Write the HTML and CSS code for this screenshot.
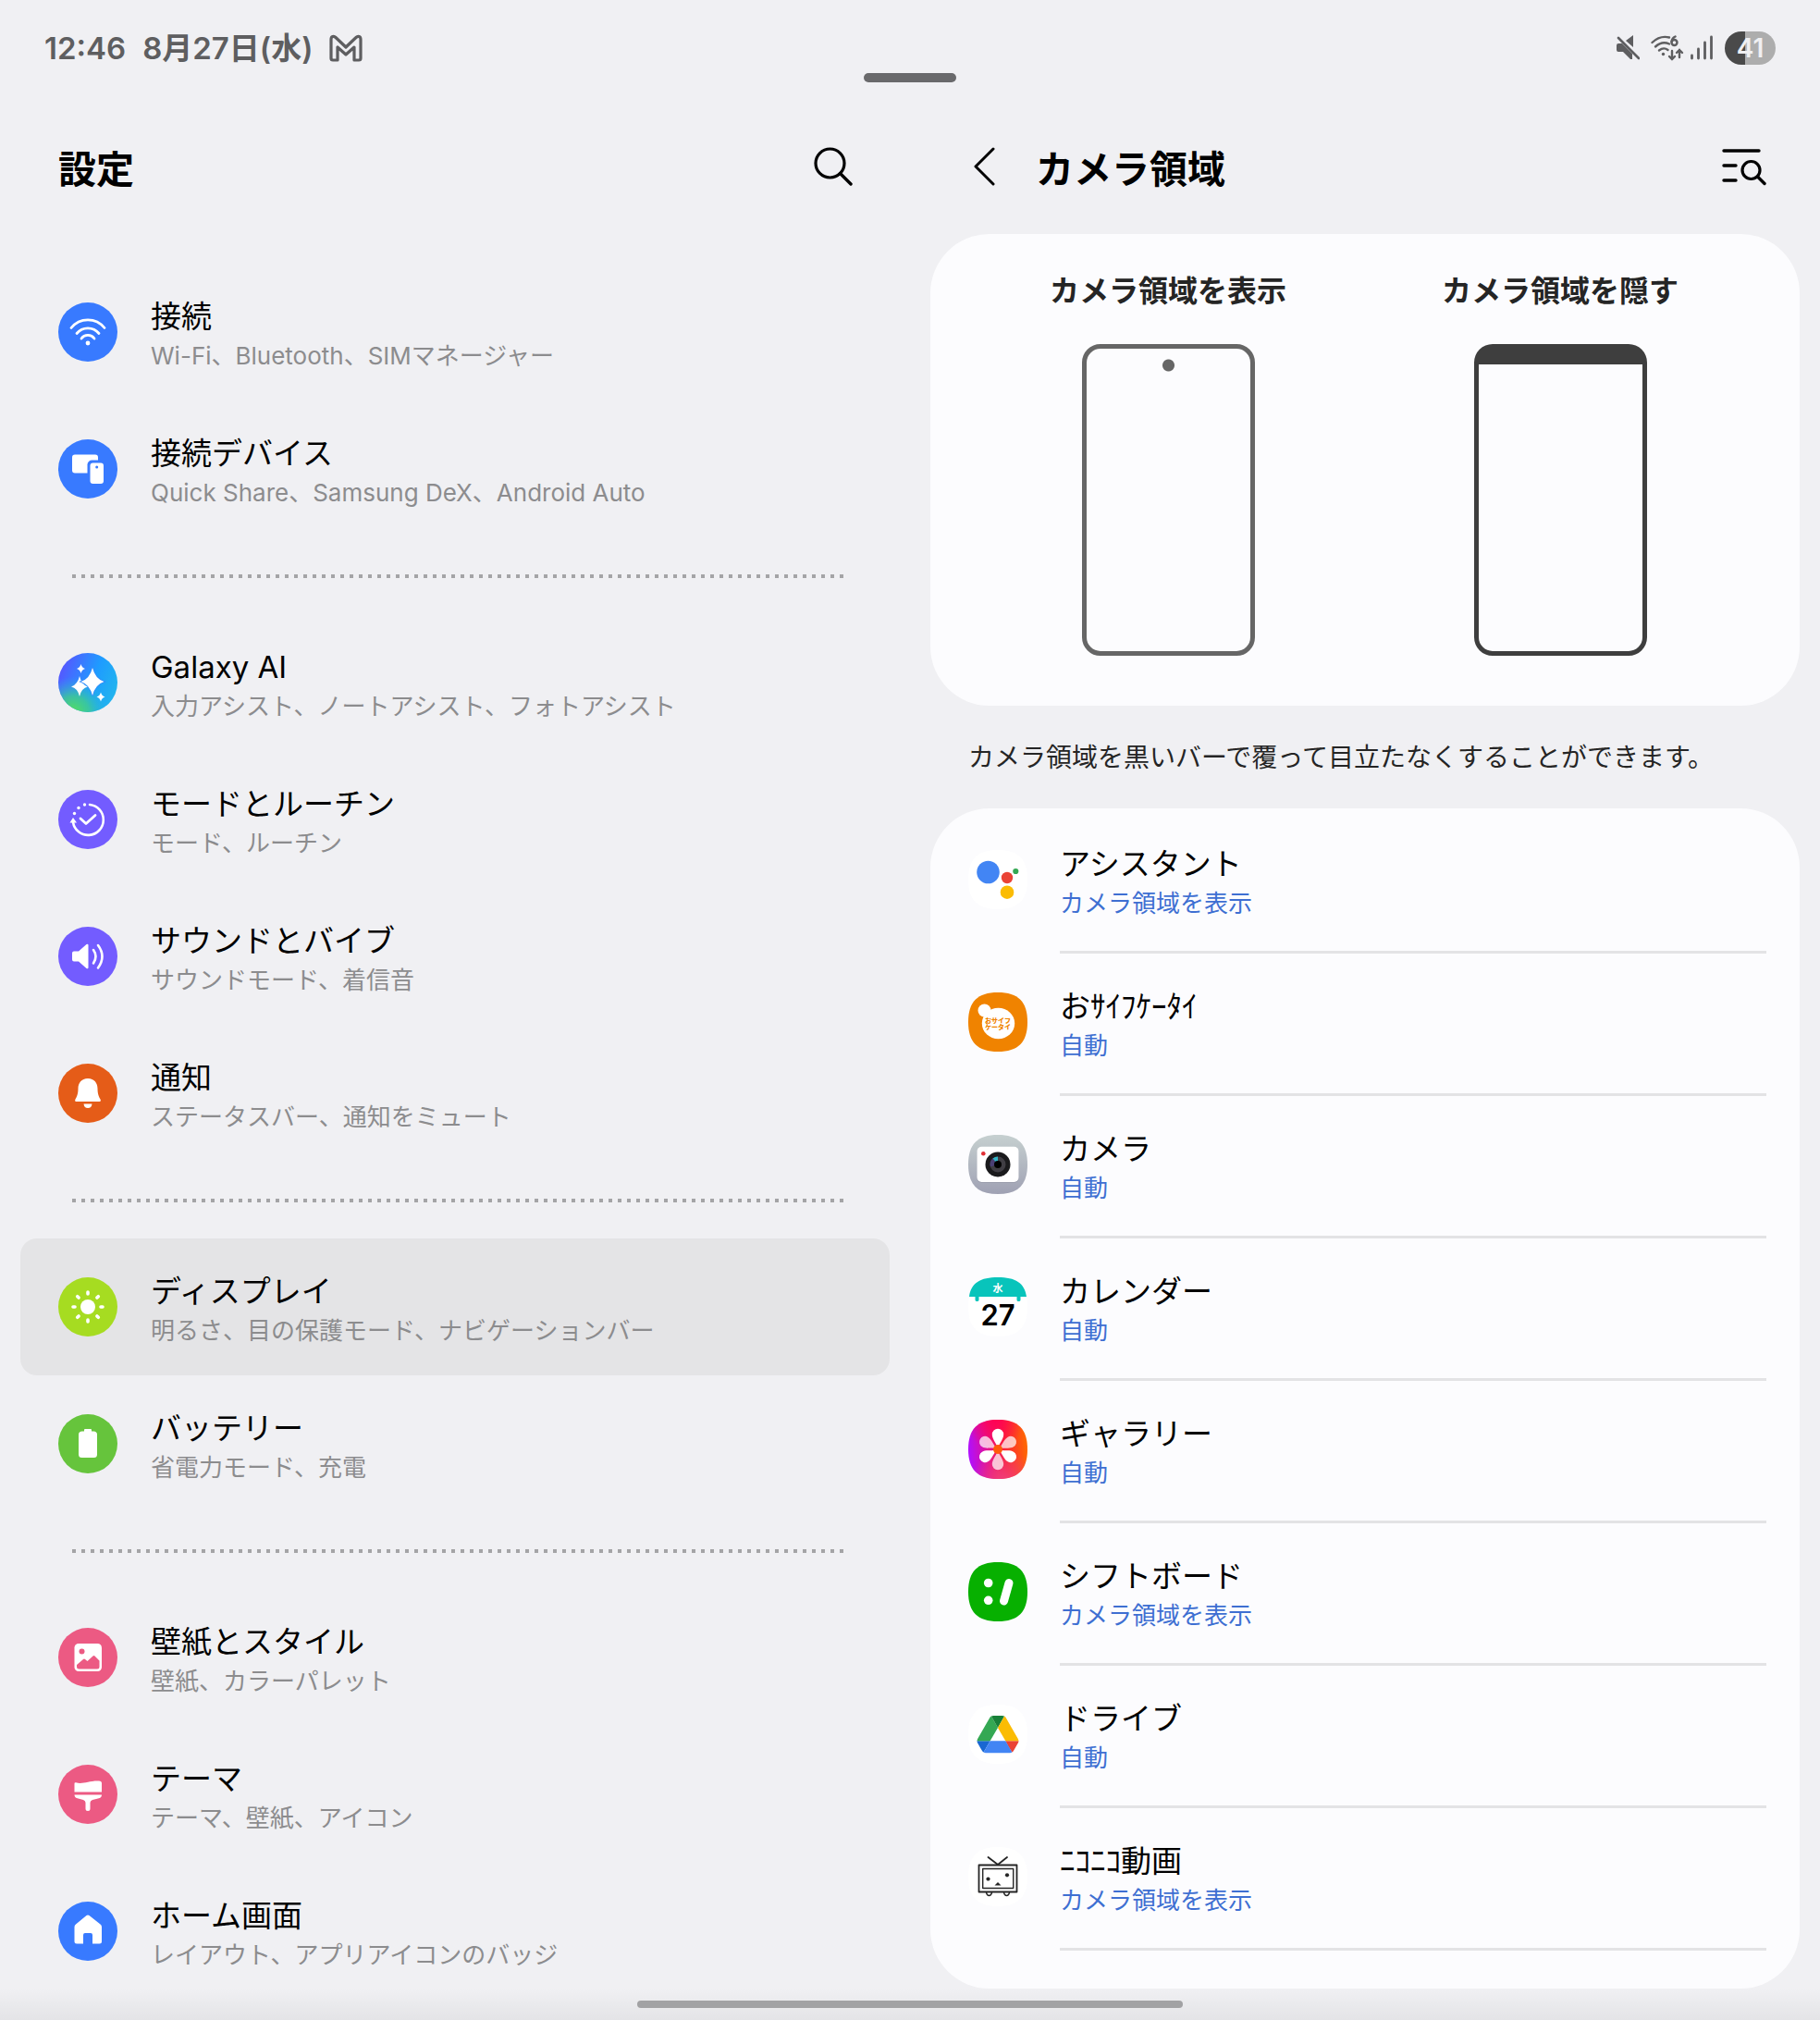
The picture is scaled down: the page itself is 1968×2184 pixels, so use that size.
FILE: index.html
```html
<!DOCTYPE html>
<html lang="ja">
<head>
  <meta charset="UTF-8">
  <meta name="viewport" content="width=device-width, initial-scale=1.0">
  <title>設定</title>
  <link rel="stylesheet" href="styles.css">
</head>
<body>
  <header class="status-bar">
    <div class="status-left">
      <span>12:46</span>
      <span>8月27日(水)</span>
      <svg class="mail-icon" viewBox="0 0 36 30"><path d="M2 26V5.500C2 2 5 1.500 7 3.500L18 14 29 3.500C31 1.500 34 2 34 5.500V26C34 27.500 33 28 32 28H27V14L18 22 9 14V28H4C3 28 2 27.500 2 26Z" fill="none" stroke="#5e5e60" stroke-width="3.200" stroke-linejoin="round"/></svg>
    </div>
    <div class="status-right">
      <svg class="mute-icon" viewBox="0 0 26 28"><path d="M1 11Q1 9 3 9H7L18 20V26L16 26 8 18H3Q1 18 1 16ZM11 6 19 0V13Z" fill="#5e5e60"/><path d="M3 3 25 25" stroke="#5e5e60" stroke-width="2.600" stroke-linecap="round"/></svg>
      <svg class="wifi6-icon" viewBox="0 0 36 28"><g fill="none" stroke="#5e5e60" stroke-width="2.400" stroke-linecap="round"><path d="M1.500 8Q10 0 20 2.500"/><path d="M5 12.500Q12 6 20 9.500"/><path d="M9 16.500Q14 12.500 18.500 16"/><path d="M23 17V26M20 23 23 26 26 23M31 24V16M28 19 31 16 34 19"/><circle cx="25.500" cy="8" r="3"/><path d="M22.500 7Q23 3 26.500 1.500"/></g><circle cx="13.500" cy="20.500" r="1.700" fill="#5e5e60"/></svg>
      <svg class="signal-icon" viewBox="0 0 26 28"><path d="M2.500 22V25M9.500 15V25M16.500 8V25M23.500 2V25" stroke="#5e5e60" stroke-width="2.800" stroke-linecap="round"/></svg>
      <span class="battery">41</span>
    </div>
    <span class="handle"></span>
  </header>

  <main class="panes">
    <section class="pane">
      <div class="title-bar">
        <h1>設定</h1>
        <button class="icon-button" aria-label="検索">
          <svg class="search-icon" viewBox="0 0 42 42"><circle cx="17.500" cy="17.500" r="15.500" fill="none" stroke="#000" stroke-width="3.200"/><path d="M28.500 28.500 40 40" stroke="#000" stroke-width="3.400" stroke-linecap="round"/></svg>
        </button>
      </div>

      <nav class="menu">
        <a class="menu-item" href="#">
          <svg class="icon" viewBox="0 0 64 64"><circle cx="32" cy="32" r="32" fill="#387aff"/><g fill="none" stroke="#fff" stroke-width="2.800" stroke-linecap="round"><path d="M14 27.500A23 23 0 0 1 50 27.500"/><path d="M20 33.500A15.500 15.500 0 0 1 44 33.500"/><path d="M25 39A8.700 8.700 0 0 1 39 39"/></g><circle cx="32" cy="44" r="2.400" fill="#fff"/></svg>
          <span class="text"><span class="name">接続</span><span class="detail">Wi-Fi、Bluetooth、SIMマネージャー</span></span>
        </a>
        <a class="menu-item" href="#">
          <svg class="icon" viewBox="0 0 64 64"><circle cx="32" cy="32" r="32" fill="#387aff"/><rect x="15" y="16.500" width="28" height="20" rx="3" fill="#fff"/><rect x="31.500" y="22.500" width="20" height="28" rx="5" fill="#387aff"/><rect x="34.500" y="25.500" width="14.500" height="22.500" rx="3" fill="#fff"/><circle cx="41.700" cy="30" r="1.500" fill="#387aff"/></svg>
          <span class="text"><span class="name">接続デバイス</span><span class="detail">Quick Share、Samsung DeX、Android Auto</span></span>
        </a>

        <hr class="dots">

        <a class="menu-item" href="#">
          <svg class="icon" viewBox="0 0 64 64">
            <defs>
              <linearGradient id="ai" x1="0" y1="0.200" x2="1" y2="0.600"><stop offset="0" stop-color="#5a50ff"/><stop offset="0.600" stop-color="#1e9cff"/><stop offset="1" stop-color="#22b4ee"/></linearGradient>
              <radialGradient id="aiGreen" cx="0.250" cy="1" r="0.600"><stop offset="0" stop-color="#56e05a"/><stop offset="0.450" stop-color="#3fcf8c" stop-opacity="0.800"/><stop offset="1" stop-color="#22b4ee" stop-opacity="0"/></radialGradient>
            </defs>
            <circle cx="32" cy="32" r="32" fill="url(#ai)"/><circle cx="32" cy="32" r="32" fill="url(#aiGreen)"/>
            <g fill="#fff"><path d="M23 25Q25 34 32 36.500 25 38 23 47 21 38 14 36.500 21 34 23 25Z"/><path d="M37 16Q40 28 49.500 31 40 34 37 46 34 34 24.500 31 34 28 37 16Z" stroke="#3089fb" stroke-width="1.500" paint-order="stroke"/><path d="M24.500 12Q25.500 16 29 17 25.500 18 24.500 22 23.500 18 20 17 23.500 16 24.500 12Z"/><path d="M46 42.500Q47 46.500 50.500 47.500 47 48.500 46 52.500 45 48.500 41.500 47.500 45 46.500 46 42.500Z"/></g>
          </svg>
          <span class="text"><span class="name">Galaxy AI</span><span class="detail">入力アシスト、ノートアシスト、フォトアシスト</span></span>
        </a>
        <a class="menu-item" href="#">
          <svg class="icon" viewBox="0 0 64 64"><circle cx="32" cy="32" r="32" fill="#735cff"/><path d="M34 16A16.500 16.500 0 1 1 16 35" fill="none" stroke="#fff" stroke-width="2.600" stroke-linecap="round"/><path d="M16 30 20 35.500H12.500Z" fill="#fff"/><g fill="#fff"><circle cx="28.500" cy="16" r="1.700"/><circle cx="22" cy="19.500" r="1.700"/><circle cx="17.500" cy="25.500" r="1.700"/></g><path d="M24 31 30 36.500 40 27.500" fill="none" stroke="#fff" stroke-width="2.800" stroke-linecap="round" stroke-linejoin="round"/></svg>
          <span class="text"><span class="name">モードとルーチン</span><span class="detail">モード、ルーチン</span></span>
        </a>
        <a class="menu-item" href="#">
          <svg class="icon" viewBox="0 0 64 64"><circle cx="32" cy="32" r="32" fill="#735cff"/><path d="M17 26.500H22L30.500 19Q32.500 18 32.500 20V44Q32.500 46 30.500 45L22 37.500H17Q15 37.500 15 35.500V28.500Q15 26.500 17 26.500Z" fill="#fff"/><path d="M38 25Q43 32 38 39.500M43 20Q52 32 43 44.500" fill="none" stroke="#fff" stroke-width="2.600" stroke-linecap="round"/></svg>
          <span class="text"><span class="name">サウンドとバイブ</span><span class="detail">サウンドモード、着信音</span></span>
        </a>
        <a class="menu-item" href="#">
          <svg class="icon" viewBox="0 0 64 64"><circle cx="32" cy="32" r="32" fill="#e55c18"/><path d="M32 16C25 16 21.500 21 21.500 27 21.500 33 20 36 18.500 38.500 17.500 40.500 18.500 41 20 41H44C45.500 41 46.500 40.500 45.500 38.500 44 36 42.500 33 42.500 27 42.500 21 39 16 32 16ZM27.500 43.500H36.500Q36 48 32 48 28 48 27.500 43.500Z" fill="#fff"/></svg>
          <span class="text"><span class="name">通知</span><span class="detail">ステータスバー、通知をミュート</span></span>
        </a>

        <hr class="dots">

        <a class="menu-item selected" href="#">
          <svg class="icon" viewBox="0 0 64 64"><circle cx="32" cy="32" r="32" fill="#a6dc21"/><circle cx="32" cy="32" r="8" fill="#fff"/><path d="M32 16V18M32 46V48M16 32H18M46 32H48M20.700 20.700 22.100 22.100M41.900 41.900 43.300 43.300M20.700 43.300 22.100 41.900M41.900 22.100 43.300 20.700" stroke="#fff" stroke-width="3.600" stroke-linecap="round"/></svg>
          <span class="text"><span class="name">ディスプレイ</span><span class="detail">明るさ、目の保護モード、ナビゲーションバー</span></span>
        </a>
        <a class="menu-item" href="#">
          <svg class="icon" viewBox="0 0 64 64"><circle cx="32" cy="32" r="32" fill="#66c43c"/><path d="M28 18.500V17Q28 16 29 16H35Q36 16 36 17V18.500H38Q42 18.500 42 22V43.500Q42 47 38.500 47H25.500Q22 47 22 43.500V22Q22 18.500 26 18.500Z" fill="#fff"/></svg>
          <span class="text"><span class="name">バッテリー</span><span class="detail">省電力モード、充電</span></span>
        </a>

        <hr class="dots">

        <a class="menu-item" href="#">
          <svg class="icon" viewBox="0 0 64 64"><circle cx="32" cy="32" r="32" fill="#ec5a83"/><rect x="17.500" y="17" width="29.500" height="30" rx="4.500" fill="#fff"/><circle cx="25.500" cy="25.500" r="3" fill="#ec5a83"/><path d="M20 40 27 34Q28 33 29 34L31.500 36 37.500 30.500Q38.500 29.500 39.500 30.500L44.500 35.500V42Q44.500 44.500 42 44.500H22.500Q20 44.500 20 42Z" fill="#ec5a83"/></svg>
          <span class="text"><span class="name">壁紙とスタイル</span><span class="detail">壁紙、カラーパレット</span></span>
        </a>
        <a class="menu-item" href="#">
          <svg class="icon" viewBox="0 0 64 64"><circle cx="32" cy="32" r="32" fill="#ec5a83"/><path d="M17.500 20.500Q17.500 19 19 19.300C27 21.500 33 17 44 17.500Q47 17.500 47 20V29.500H17.500ZM17.500 32.500H47Q47 36 43 36.500L37 38Q34.500 39 34.500 41V47.500Q34.500 50 32 50 29.500 50 29.500 47.500V41Q29.500 39 27 38L21.500 36.500Q17.500 36 17.500 32.500Z" fill="#fff"/></svg>
          <span class="text"><span class="name">テーマ</span><span class="detail">テーマ、壁紙、アイコン</span></span>
        </a>
        <a class="menu-item" href="#">
          <svg class="icon" viewBox="0 0 64 64"><circle cx="32" cy="32" r="32" fill="#387aff"/><path d="M30.500 15Q32 14 33.500 15L45.500 24.500Q47 25.500 47 27.500V43Q47 45.500 44.500 45.500H37V36Q37 34 35 34H29Q27 34 27 36V45.500H20Q17.500 45.500 17.500 43V27.500Q17.500 25.500 19 24.500Z" fill="#fff"/></svg>
          <span class="text"><span class="name">ホーム画面</span><span class="detail">レイアウト、アプリアイコンのバッジ</span></span>
        </a>
      </nav>
    </section>

    <section class="pane">
      <div class="title-bar">
        <button class="icon-button back" aria-label="戻る">
          <svg class="back-icon" viewBox="0 0 24 42"><path d="M22 2 3 21 22 40" fill="none" stroke="#000" stroke-width="3" stroke-linecap="round" stroke-linejoin="round"/></svg>
        </button>
        <h2>カメラ領域</h2>
        <button class="icon-button" aria-label="アプリを検索">
          <svg class="filter-icon" viewBox="0 0 48 42"><path d="M2 4H40M2 20H15M2 36H15" stroke="#000" stroke-width="3.400" stroke-linecap="round"/><circle cx="31.500" cy="25" r="9.500" fill="none" stroke="#000" stroke-width="3.200"/><path d="M38.500 32 46 39.500" stroke="#000" stroke-width="3.400" stroke-linecap="round"/></svg>
        </button>
      </div>

      <div class="card preview">
        <figure class="option">
          <figcaption>カメラ領域を表示</figcaption>
          <div class="phone phone-show"></div>
        </figure>
        <figure class="option">
          <figcaption>カメラ領域を隠す</figcaption>
          <div class="phone phone-hide"></div>
        </figure>
      </div>

      <p class="note">カメラ領域を黒いバーで覆って目立たなくすることができます。</p>

      <div class="card apps">
        <a class="app" href="#">
          <svg class="icon" viewBox="0 0 64 64"><path d="M32 0C54 0 64 10 64 32S54 64 32 64 0 54 0 32 10 0 32 0Z" fill="#fff"/><circle cx="21.500" cy="24" r="12.300" fill="#4285f4"/><circle cx="42" cy="30" r="6.200" fill="#ea4335"/><circle cx="42" cy="45.700" r="7.300" fill="#fbbc04"/><circle cx="51.300" cy="23" r="3.100" fill="#34a853"/></svg>
          <span class="text"><span class="name">アシスタント</span><span class="detail">カメラ領域を表示</span></span>
        </a>
        <a class="app" href="#">
          <svg class="icon" viewBox="0 0 64 64"><path d="M32 0C54 0 64 10 64 32S54 64 32 64 0 54 0 32 10 0 32 0Z" fill="#f08300"/><circle cx="17.500" cy="19.500" r="7" fill="#fff"/><ellipse cx="32.500" cy="33.500" rx="17.700" ry="16.700" fill="#fff"/><text class="saifu" x="32" y="33">おサイフ</text><text class="saifu" x="32" y="40">ケータイ</text></svg>
          <span class="text"><span class="name">おｻｲﾌｹｰﾀｲ</span><span class="detail">自動</span></span>
        </a>
        <a class="app" href="#">
          <svg class="icon" viewBox="0 0 64 64">
            <defs><linearGradient id="cam" x1="0" y1="0" x2="0" y2="1"><stop offset="0" stop-color="#c6d0d0"/><stop offset="1" stop-color="#9fa1b3"/></linearGradient></defs>
            <path d="M32 0C54 0 64 10 64 32S54 64 32 64 0 54 0 32 10 0 32 0Z" fill="url(#cam)"/><rect x="9.500" y="13.500" width="45" height="38.500" rx="5" fill="#8f92a2" opacity="0.500"/><rect x="9.500" y="12.700" width="45" height="38.300" rx="5" fill="#fff"/><circle cx="16.300" cy="20.300" r="2.300" fill="#e02f35"/><circle cx="32" cy="32" r="13.500" fill="#1a1a1c"/><circle cx="32" cy="32" r="8.500" fill="#403e44"/><path d="M32 32 24 34.500A8.500 8.500 0 0 1 27 25Z" fill="#4a3f74"/><path d="M32 32 26.500 25.500A8.500 8.500 0 0 1 32 23.500Z" fill="#32b5c6"/><circle cx="32" cy="32" r="4" fill="#000"/>
          </svg>
          <span class="text"><span class="name">カメラ</span><span class="detail">自動</span></span>
        </a>
        <a class="app" href="#">
          <svg class="icon" viewBox="0 0 64 64"><path d="M32 0C54 0 64 10 64 32S54 64 32 64 0 54 0 32 10 0 32 0Z" fill="#fff"/><path d="M1 21C3 6 13 0 32 0S61 6 63 21H56.500V24.500Q56.500 26 54.500 26 52.500 26 52.500 24.500V21H11.500V24.500Q11.500 26 9.500 26 7.500 26 7.500 24.500V21Z" fill="#08c4bb"/><text class="cal-week" x="32" y="16">水</text><text class="cal-day" x="32" y="52">27</text></svg>
          <span class="text"><span class="name">カレンダー</span><span class="detail">自動</span></span>
        </a>
        <a class="app" href="#">
          <svg class="icon" viewBox="0 0 64 64">
            <defs>
              <linearGradient id="gal" x1="0" y1="0.500" x2="1" y2="0.400"><stop offset="0" stop-color="#b010ff"/><stop offset="0.300" stop-color="#e0109a"/><stop offset="0.600" stop-color="#fb2238"/><stop offset="1" stop-color="#ff6a00"/></linearGradient>
              <radialGradient id="galTop" cx="0.450" cy="0" r="0.500"><stop offset="0" stop-color="#ff0055"/><stop offset="1" stop-color="#ff0055" stop-opacity="0"/></radialGradient>
              <radialGradient id="galBottom" cx="0.600" cy="1.050" r="0.550"><stop offset="0" stop-color="#f0407a"/><stop offset="1" stop-color="#f0407a" stop-opacity="0"/></radialGradient>
              <path id="petal" d="M32 30C29 24 25.800 20 25.800 16A6.200 6.200 0 0 1 38.200 16C38.200 20 35 24 32 30Z"/>
            </defs>
            <path d="M32 0C54 0 64 10 64 32S54 64 32 64 0 54 0 32 10 0 32 0Z" fill="url(#gal)"/><path d="M32 0C54 0 64 10 64 32S54 64 32 64 0 54 0 32 10 0 32 0Z" fill="url(#galTop)"/><path d="M32 0C54 0 64 10 64 32S54 64 32 64 0 54 0 32 10 0 32 0Z" fill="url(#galBottom)"/>
            <g fill="#fff"><use href="#petal"/><use href="#petal" transform="rotate(120 32 32)"/><use href="#petal" transform="rotate(240 32 32)"/><g opacity="0.720"><use href="#petal" transform="rotate(60 32 32)"/><use href="#petal" transform="rotate(180 32 32)"/><use href="#petal" transform="rotate(300 32 32)"/></g></g>
            <circle cx="32" cy="32" r="5" fill="#ff5a0a"/>
          </svg>
          <span class="text"><span class="name">ギャラリー</span><span class="detail">自動</span></span>
        </a>
        <a class="app" href="#">
          <svg class="icon" viewBox="0 0 64 64"><path d="M32 0C54 0 64 10 64 32S54 64 32 64 0 54 0 32 10 0 32 0Z" fill="#07b000"/><circle cx="21.700" cy="22.500" r="4.800" fill="#fff"/><circle cx="21.700" cy="41.300" r="4.800" fill="#fff"/><path d="M44 22.500 38.500 42" stroke="#fff" stroke-width="9" stroke-linecap="round"/></svg>
          <span class="text"><span class="name">シフトボード</span><span class="detail">カメラ領域を表示</span></span>
        </a>
        <a class="app" href="#">
          <svg class="icon" viewBox="0 0 64 64"><path d="M32 0C54 0 64 10 64 32S54 64 32 64 0 54 0 32 10 0 32 0Z" fill="#fff"/><g transform="translate(9.500 12) scale(0.515)"><path d="M6.600 66.850 10.450 73.500C11.250 74.900 12.400 76 13.750 76.800L27.500 53H0C0 54.550 0.400 56.100 1.200 57.500Z" fill="#1967d2"/><path d="M43.650 25 29.900 1.200C28.550 2 27.400 3.100 26.600 4.500L1.200 48.500C0.400 49.900 0 51.450 0 53H27.500Z" fill="#34a853"/><path d="M73.550 76.800C74.900 76 76.050 74.900 76.850 73.500L86.100 57.500C86.900 56.100 87.300 54.550 87.300 53H59.800L65.650 64.500Z" fill="#ea4335"/><path d="M43.650 25 57.400 1.200C56.050 0.400 54.500 0 52.900 0H34.400C32.800 0 31.250 0.450 29.900 1.200Z" fill="#188038"/><path d="M59.800 53H27.500L13.750 76.800C15.100 77.600 16.650 78 18.250 78H69.050C70.650 78 72.200 77.550 73.550 76.800Z" fill="#4285f4"/><path d="M73.400 26.500 60.700 4.500C59.900 3.100 58.750 2 57.400 1.200L43.650 25 59.800 53H87.250C87.250 51.450 86.850 49.900 86.050 48.500Z" fill="#fbbc04"/></g></svg>
          <span class="text"><span class="name">ドライブ</span><span class="detail">自動</span></span>
        </a>
        <a class="app" href="#">
          <svg class="icon" viewBox="0 0 64 64"><path d="M32 0C54 0 64 10 64 32S54 64 32 64 0 54 0 32 10 0 32 0Z" fill="#fff"/><g fill="none" stroke="#252525" stroke-linejoin="round"><rect x="11.500" y="19.500" width="41" height="29" stroke-width="1.800"/><rect x="15.700" y="23.500" width="33" height="21" stroke-width="1.400"/><path d="M21.500 11 32 19 42 11" stroke-width="1.800" stroke-linecap="round"/><path d="M19.500 49Q20 52.500 22.500 52.500T25.500 49M38.500 49Q39 52.500 41.500 52.500T44.500 49" stroke-width="1.500"/></g><circle cx="21.500" cy="34.500" r="2.100" fill="#252525"/><circle cx="42" cy="30.300" r="2.100" fill="#252525"/><path d="M32 38 35.500 41.500H28.500Z" fill="#252525"/></svg>
          <span class="text"><span class="name">ﾆｺﾆｺ動画</span><span class="detail">カメラ領域を表示</span></span>
        </a>
        <div class="app-end"></div>
      </div>
    </section>
  </main>

  <div class="nav-bar"><span></span></div>
</body>
</html>
```

FILE: styles.css
```css
* {
  margin: 0;
  padding: 0;
  box-sizing: border-box;
}

body {
  display: flex;
  flex-direction: column;
  height: 100vh;
  overflow: hidden;
  position: relative;
  background-color: #f0f0f3;
  color: #000000;
  font-family: Inter, "Noto Sans CJK JP", sans-serif;
}

a {
  color: inherit;
  text-decoration: none;
}

/* status bar */

.status-bar {
  display: flex;
  justify-content: space-between;
  align-items: center;
  position: relative;
  height: 104px;
  padding: 0 48px;
  color: #5e5e60;
}

.status-left {
  display: flex;
  align-items: center;
  gap: 18px;
  font-size: 33px;
  font-weight: 600;
  line-height: 40px;
}

.mail-icon {
  width: 36px;
  height: 30px;
}

.status-right {
  display: flex;
  align-items: center;
  gap: 12px;
}

.mute-icon,
.signal-icon {
  width: 26px;
  height: 28px;
}

.wifi6-icon {
  width: 36px;
  height: 28px;
  margin-right: -6px;
}

.battery {
  width: 55px;
  border-radius: 18px;
  background: linear-gradient(to right, #4a4a4a 40%, #adadad 40%);
  color: #f0f0f2;
  font-size: 28px;
  font-weight: 600;
  line-height: 36px;
  text-align: center;
}

.handle {
  position: absolute;
  left: 50%;
  bottom: 15px;
  width: 100px;
  height: 10px;
  margin-left: -50px;
  border-radius: 5px;
  background-color: #69696b;
}

/* two panes */

.panes {
  display: flex;
  flex: 1;
  min-height: 0;
}

.pane {
  flex: 1;
  display: flex;
  flex-direction: column;
  min-width: 0;
  padding: 0 22px;
}

.title-bar {
  display: flex;
  align-items: center;
  flex-shrink: 0;
  height: 149px;
  padding: 2px 36px 0 41px;
}

h1,
h2 {
  flex: 1;
  padding-top: 6px;
  font-size: 41px;
  font-weight: 700;
  line-height: 60px;
}

.icon-button {
  display: flex;
  border: none;
  background: none;
  cursor: pointer;
}

.back {
  margin: 0 44px 0 5px;
}

.search-icon {
  width: 42px;
  height: 42px;
  margin-right: 4px;
}

.back-icon {
  width: 24px;
  height: 42px;
}

.filter-icon {
  width: 48px;
  height: 42px;
}

/* left menu */

.menu {
  padding-top: 32px;
}

.menu-item {
  display: flex;
  align-items: center;
  gap: 36px;
  height: 148px;
  padding: 0 41px;
  border-radius: 18px;
}

.selected {
  background-color: #e4e4e6;
}

.icon {
  flex-shrink: 0;
  width: 64px;
  height: 64px;
}

.text {
  display: flex;
  flex-direction: column;
  padding-top: 8px;
}

.name {
  font-size: 33px;
  line-height: 44px;
}

.detail {
  font-size: 26px;
  line-height: 42px;
  color: #8c8c8e;
}

.dots {
  height: 4px;
  margin: 40px 50px 39px 56px;
  border: none;
  background: linear-gradient(to right, #a4a4a6 4px, transparent 4px) 0 0 / 10px 4px;
}

/* right pane */

.card {
  flex-shrink: 0;
  border-radius: 64px;
  background-color: #fcfcfe;
}

.preview {
  display: flex;
  padding: 37px 47px 54px 45px;
}

.option {
  flex: 1;
  display: flex;
  flex-direction: column;
  align-items: center;
  gap: 33px;
}

figcaption {
  color: #252525;
  font-size: 32px;
  font-weight: 700;
  line-height: 49px;
}

.phone {
  width: 187px;
  height: 337px;
  border: 5px solid #666666;
  border-radius: 20px;
}

.phone-show {
  background: radial-gradient(circle 7px at 50% 18px, #666666 6px, transparent 7px);
}

.phone-hide {
  border-color: #3e3e3e;
  border-top-width: 22px;
}

.note {
  padding: 37px 41px 35px;
  color: #252525;
  font-size: 28px;
  line-height: 39px;
}

.apps {
  overflow: hidden;
  padding: 0 36px 0 41px;
}

.app {
  display: flex;
  align-items: center;
  gap: 35px;
  height: 154px;
}

.app .text,
.app-end {
  flex: 1;
}

.app .detail {
  color: #3e6fd2;
}

/* divider starts at the text, not at the icon */
.app + .app .text {
  height: 154px;
  padding-top: 35px;
  border-top: 3px solid #e3e3e5;
}

.app-end {
  height: 44px;
  margin-left: 99px;
  border-top: 3px solid #e3e3e5;
}

.saifu {
  fill: #f08300;
  font-size: 7px;
  font-weight: 900;
  text-anchor: middle;
}

.cal-week {
  fill: #ffffff;
  font-size: 11px;
  font-weight: 700;
  text-anchor: middle;
}

.cal-day {
  fill: #000000;
  font-size: 31px;
  font-weight: 600;
  text-anchor: middle;
}

/* gesture bar */

.nav-bar {
  position: absolute;
  left: 0;
  right: 0;
  bottom: 0;
  display: flex;
  justify-content: center;
  height: 34px;
  padding-top: 13px;
  background: linear-gradient(to bottom, rgba(0, 0, 0, 0), rgba(0, 0, 0, 0.05));
}

.nav-bar span {
  width: 30%;
  height: 8px;
  border-radius: 4px;
  background-color: #a2a2a4;
}
```
